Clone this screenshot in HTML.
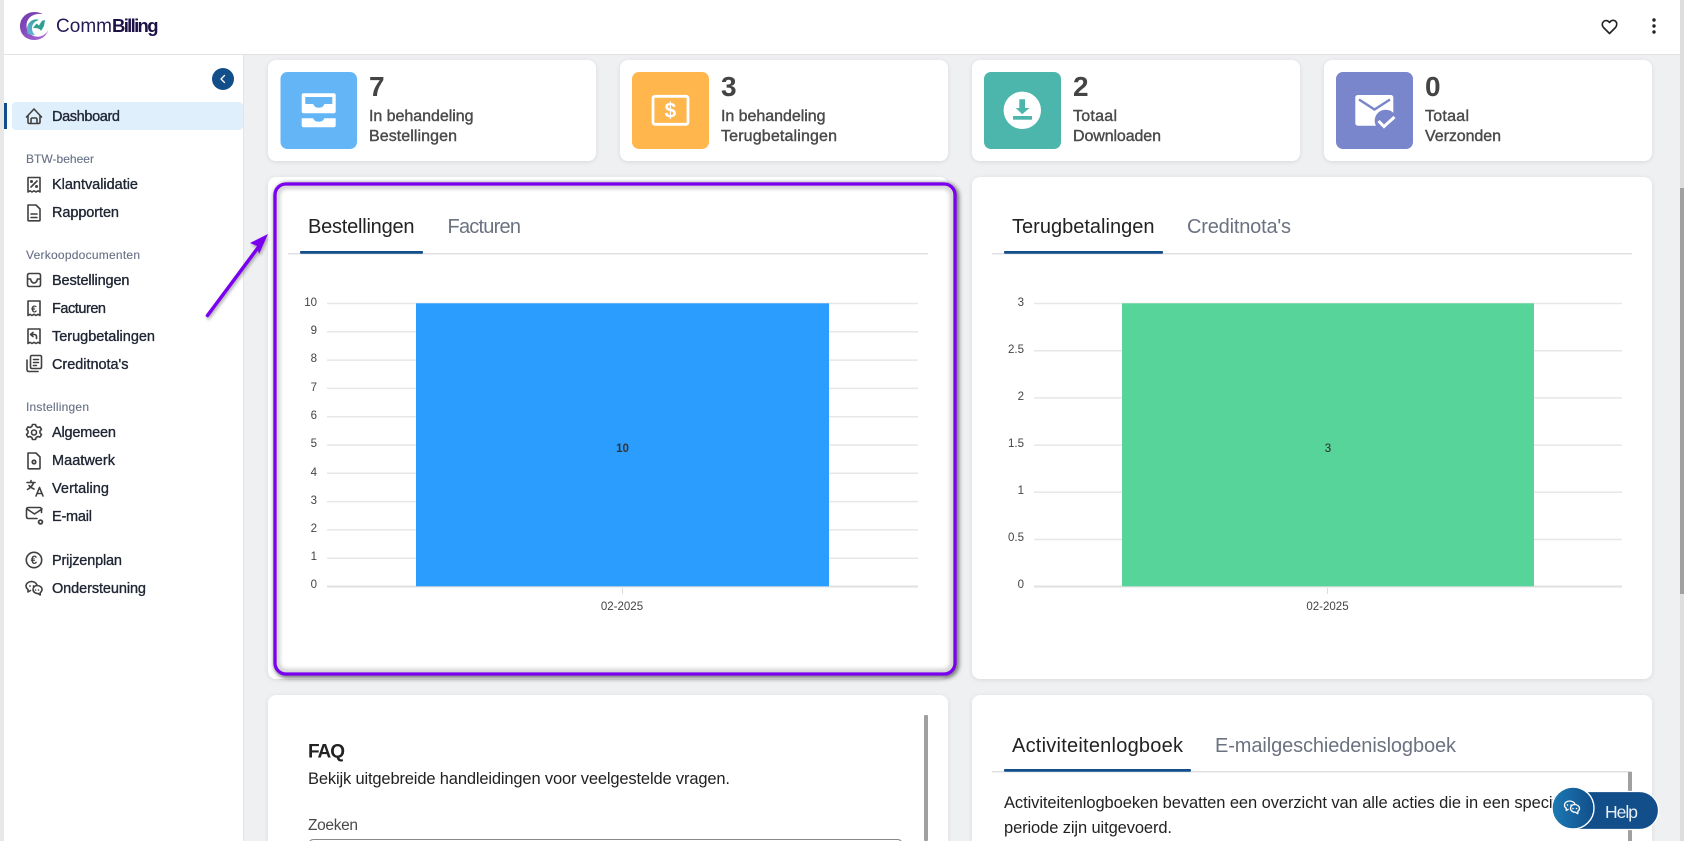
<!DOCTYPE html>
<html lang="nl"><head><meta charset="utf-8"><title>CommBilling</title>
<style>
html,body{margin:0;padding:0;width:1684px;height:841px;overflow:hidden;background:#eff0f2}
svg{display:block;font-family:"Liberation Sans",Arial,sans-serif}
.n text{font-size:14.5px;fill:#1f2533;stroke:#1f2533;stroke-width:.35}
.s text{font-size:12px;fill:#667085;stroke:#667085;stroke-width:.12}
.ic{fill:none;stroke:#404040;stroke-width:1.6;stroke-linecap:round;stroke-linejoin:round}
.ict{font-size:10.5px;font-weight:bold;fill:#404040;text-anchor:middle}
.num{font-size:28px;font-weight:bold;fill:#444}
.lbl{font-size:16px;fill:#4a4a4a;stroke:#4a4a4a;stroke-width:.4}
.tab{font-size:20px;fill:#222}
.tabi{font-size:20px;fill:#6b7280}
.y{font-size:11.5px;fill:#444;text-anchor:end}
.g{stroke:#e7e7e7;stroke-width:1.5}
.t{font-size:16.5px;fill:#222}
</style></head><body>
<svg width="1684" height="841" viewBox="0 0 1684 841" xmlns="http://www.w3.org/2000/svg">
<defs>
<filter id="sh" x="-5%" y="-5%" width="110%" height="115%"><feDropShadow dx="0" dy="1" stdDeviation="2" flood-color="#000" flood-opacity=".1"/></filter>
<filter id="bl" x="-5%" y="-5%" width="110%" height="110%"><feGaussianBlur stdDeviation="2.500"/></filter>
<filter id="ab" x="-30%" y="-30%" width="160%" height="160%"><feDropShadow dx="1" dy="2" stdDeviation="1.500" flood-color="#000" flood-opacity=".35"/></filter>
<linearGradient id="hg" x1="0" x2="1"><stop offset="0" stop-color="#1c7ab4"/><stop offset="1" stop-color="#114e8a"/></linearGradient>
<linearGradient id="lg" x1="0" y1="0" x2="1" y2="1"><stop offset="0" stop-color="#6a37a8"/><stop offset="1" stop-color="#b06ad8"/></linearGradient>
<linearGradient id="lt" x1="0" y1="1" x2="1" y2="0"><stop offset="0" stop-color="#6ab6e0"/><stop offset="1" stop-color="#2f9f8f"/></linearGradient>
</defs>
<rect width="1684" height="841" fill="#eff0f2"/>
<rect x="0" y="0" width="4" height="841" fill="#e8e8e8"/>
<rect x="1680" y="0" width="4" height="841" fill="#dedede"/>
<rect x="1680" y="188" width="4" height="406" fill="#a0a0a0"/>

<!-- sidebar -->
<rect x="4" y="54" width="240" height="787" fill="#fff"/>
<rect x="243" y="54" width="1" height="787" fill="#e4e4e4"/>
<rect x="12" y="102" width="231" height="28" rx="4" fill="#e0effc"/>
<rect x="4" y="103" width="3" height="26" fill="#114e8a"/>
<circle cx="223" cy="79" r="11" fill="#114e8a"/>
<path d="M224.500 75.500 221 79l3.500 3.500" fill="none" stroke="#fff" stroke-width="1.300" stroke-linecap="round" stroke-linejoin="round"/>

<g class="n">
<text x="52" y="121" textLength="68">Dashboard</text>
<text x="52" y="189" textLength="86">Klantvalidatie</text>
<text x="52" y="217" textLength="67">Rapporten</text>
<text x="52" y="285" textLength="77.500">Bestellingen</text>
<text x="52" y="313" textLength="54">Facturen</text>
<text x="52" y="341" textLength="103">Terugbetalingen</text>
<text x="52" y="369" textLength="76.500">Creditnota's</text>
<text x="52" y="437" textLength="64">Algemeen</text>
<text x="52" y="465" textLength="63">Maatwerk</text>
<text x="52" y="493" textLength="57">Vertaling</text>
<text x="52" y="521" textLength="40">E-mail</text>
<text x="52" y="565" textLength="70">Prijzenplan</text>
<text x="52" y="593" textLength="94">Ondersteuning</text>
</g>
<g class="s">
<text x="26" y="163" textLength="68">BTW-beheer</text>
<text x="26" y="259" textLength="114">Verkoopdocumenten</text>
<text x="26" y="411" textLength="63">Instellingen</text>
</g>

<g class="ic">
<path d="M26.500 117 34 109l7.500 8M28 115.500V122q0 1.500 1.500 1.500h9q1.500 0 1.500-1.500v-6.500M31 123.500v-4q0-1.500 1.500-1.500h3q1.500 0 1.500 1.500v4"/>
<path d="M28 177.500h12v14.500l-2-1.200-2 1.200-2-1.200-2 1.200-2-1.200-2 1.200zM37 181l-6 6"/><circle cx="31.500" cy="181.500" r=".7"/><circle cx="36.500" cy="186.500" r=".7"/>
<path d="M28 205h8l4 4v11q0 .8-.8.800H28.800q-.8 0-.8-.8zM31 214h6M31 217.500h6"/>
<path d="M27.500 275.500q0-2 2-2h9q2 0 2 2v9q0 2-2 2h-9q-2 0-2-2zM27.500 279h3q1 4 3.500 4t3.500-4h3"/>
<path d="M28 301h12v14.500l-2-1.200-2 1.200-2-1.200-2 1.200-2-1.200-2 1.200z"/>
<path d="M33 336.500l-2.500-2 2.500-2M30.500 334.500h3.500q2.500 0 2.500 2v2"/><path d="M28 329h12v14.500l-2-1.200-2 1.200-2-1.200-2 1.200-2-1.200-2 1.200z"/>
<path d="M30.500 357q0-1.500 1.500-1.500h8q1.500 0 1.500 1.500v10q0 1.500-1.500 1.500h-8q-1.500 0-1.500-1.500zM33.500 359.500h5M33.500 362.500h5M33.500 365.500h3M27 360v9.500q0 2 2 2h9"/>
<path d="M32.500 424.500h3l.7 2 1.800 1 2-.6 1.500 2.500-1.500 1.500v2.200l1.500 1.500-1.500 2.500-2-.6-1.800 1-.7 2h-3l-.7-2-1.800-1-2 .6-1.500-2.500 1.500-1.500v-2.200l-1.500-1.500 1.500-2.500 2 .6 1.800-1z"/><circle cx="34" cy="432.500" r="2.500"/>
<path d="M28 453h8l4 4v11q0 .8-.8.800H28.800q-.8 0-.8-.8z"/>
<path d="M27 482.500h8M31 480.500v2M33.500 482.500q-1 4-6 7M29 485.500q1.500 2 5 3.500M36 496l3.500-8.500 3.500 8.500M37 493.500h5"/>
<path d="M37 518.500h-8.500q-2 0-2-2v-7q0-2 2-2h11q2 0 2 2v3M27 509l7.500 5 7.500-5"/>
<circle cx="34" cy="560" r="7.700"/>
<path d="M31.500 581.500c-3 0-5.500 2-5.500 4.500 0 1.500.8 2.600 2 3.500v2.500l2.500-1.500"/><path d="M37 585c-1-2-3-3.500-5.500-3.500"/><path d="M37 585.500c2.800 0 5 1.700 5 4 0 1.300-.7 2.400-1.800 3.200v2.300l-2.200-1.400c-2.800 0-5-1.800-5-4.100s1.800-4 4-4z"/>
</g>
<g fill="#404040">
<circle cx="34" cy="462" r="2.600"/><circle cx="34" cy="462" r=".9" fill="#fff"/>
<circle cx="40.500" cy="522" r="2.800"/><circle cx="40.500" cy="522" r="1" fill="#fff"/>
<circle cx="30" cy="586" r=".9"/><circle cx="33.500" cy="586" r=".9"/><circle cx="35.500" cy="590" r=".8"/><circle cx="38.500" cy="590" r=".8"/>
</g>
<text class="ict" x="34" y="312.500">€</text>
<text class="ict" x="34" y="564" style="font-size:11.500px">€</text>

<!-- header -->
<rect x="0" y="0" width="1680" height="54" fill="#fff"/>
<rect x="0" y="0" width="4" height="54" fill="#e8e8e8"/>
<rect x="4" y="54" width="1676" height="1" fill="#e3e3e3"/>
<!-- logo -->
<path d="M34.500 12c-8.500 0-14.500 6.500-14.500 14.300 0 8 6.200 13.700 14 13.700 7 0 12-3.500 14.500-10-3 5-8 7.500-13 6.500-5-1-9-5-9-11 0-6 4-10.500 11-11.500 2-.3 4-.2 5.500.3-2.500-1.500-5-2.300-8.500-2.300z" fill="url(#lg)"/>
<path d="M28 34c-2-5-1-10 3-13 3-2 6-2 8-1-4 1-7 4-7 8 0 3 1 5 3 7-3 0-5-.5-7-1z" fill="url(#lt)"/>
<path d="M33 28l3.500-4.500 2.500 2 4-6.500-1 1.800 3-.8-1 6-3 5c-1-2.500-3.500-3-8-3z" fill="#2f9f8f"/>
<text x="56" y="32" font-size="19" fill="#241a55" textLength="56">Comm</text>
<text x="112" y="32" font-size="18.500" font-weight="bold" fill="#1d1248" textLength="46.500">Billing</text>
<path d="M1609.500 33.500 1603.500 27.500c-4-4.500 2.500-10 6-5 3.500-5 10-.5 6 5z" fill="none" stroke="#222" stroke-width="1.600" stroke-linejoin="round"/>
<circle cx="1654" cy="20" r="1.700" fill="#222"/><circle cx="1654" cy="26" r="1.700" fill="#222"/><circle cx="1654" cy="32" r="1.700" fill="#222"/>

<!-- stat cards -->
<g fill="#fff" filter="url(#sh)">
<rect x="268" y="60" width="328" height="101" rx="8"/>
<rect x="620" y="60" width="328" height="101" rx="8"/>
<rect x="972" y="60" width="328" height="101" rx="8"/>
<rect x="1324" y="60" width="328" height="101" rx="8"/>
</g>
<rect x="280.500" y="72" width="76.500" height="77" rx="7" fill="#64b5f6"/>
<rect x="632" y="72" width="77" height="77" rx="7" fill="#ffb74d"/>
<rect x="984" y="72" width="77" height="77" rx="7" fill="#4db6ac"/>
<rect x="1336" y="72" width="77" height="77" rx="7" fill="#7986cb"/>
<!-- inbox icon -->
<path d="M301.700 95.300q0-2 2-2h30q2 0 2 2v16q0 2-2 2h-30q-2 0-2-2z" fill="#fff"/>
<path d="M305.300 97h27v7h-8q-1 3.800-5.500 3.800t-5.500-3.800h-8z" fill="#64b5f6"/>
<path d="M301.700 118.300h11.500q1 3.500 5.500 3.500t5.500-3.500h11.500v7q0 2-2 2h-30q-2 0-2-2z" fill="#fff"/>
<!-- dollar -->
<rect x="653" y="96.300" width="35" height="28" rx="2" fill="none" stroke="#fff" stroke-width="2.800"/>
<text x="670.300" y="117.500" font-size="21" font-weight="bold" fill="#fff" text-anchor="middle">$</text>
<!-- download -->
<circle cx="1022.300" cy="110.300" r="18.700" fill="#fff"/>
<path d="M1019.300 99.300h5.700v8.700h4.500l-7.300 6.200-6.500-6.200h3.600z" fill="#4db6ac"/>
<rect x="1013" y="116" width="19" height="3.700" fill="#4db6ac"/>
<!-- mail check -->
<rect x="1355.300" y="95" width="38" height="30.700" rx="2.500" fill="#fff"/>
<path d="M1359 99.500l15.500 10 15.500-10" fill="none" stroke="#7986cb" stroke-width="2.500"/>
<circle cx="1385.700" cy="120.700" r="11" fill="#7986cb"/>
<path d="M1378.500 121l5.500 5.500 10.500-9.500" fill="none" stroke="#fff" stroke-width="3"/>

<text class="num" x="369" y="96">7</text>
<text class="num" x="721" y="96">3</text>
<text class="num" x="1073" y="96">2</text>
<text class="num" x="1425" y="96">0</text>
<text class="lbl" x="369" y="121" textLength="104.500">In behandeling</text>
<text class="lbl" x="369" y="141" textLength="88">Bestellingen</text>
<text class="lbl" x="721" y="121" textLength="104.500">In behandeling</text>
<text class="lbl" x="721" y="141" textLength="116">Terugbetalingen</text>
<text class="lbl" x="1073" y="121" textLength="44">Totaal</text>
<text class="lbl" x="1073" y="141" textLength="88">Downloaden</text>
<text class="lbl" x="1425" y="121" textLength="44">Totaal</text>
<text class="lbl" x="1425" y="141" textLength="76">Verzonden</text>

<!-- chart cards -->
<g fill="#fff" filter="url(#sh)">
<rect x="268" y="177" width="680" height="502" rx="8"/>
<rect x="972" y="177" width="680" height="502" rx="8"/>
<rect x="268" y="695" width="680" height="160" rx="8"/>
<rect x="972" y="695" width="680" height="160" rx="8"/>
</g>

<!-- highlight box -->
<rect x="276.500" y="185.500" width="680" height="490" rx="11" fill="none" stroke="#333" stroke-width="4" filter="url(#bl)" opacity=".85"/>
<rect x="275" y="184" width="680" height="490" rx="11" fill="#fff"/>
<rect x="277.500" y="186.500" width="675" height="485" rx="9" fill="none" stroke="#444" stroke-width="2.500" filter="url(#bl)" opacity=".5"/>

<!-- left chart -->
<text class="tab" x="308" y="233" textLength="106.500">Bestellingen</text>
<text class="tabi" x="447.500" y="233" textLength="73.500">Facturen</text>
<rect x="288" y="253" width="640" height="1.500" fill="#e0e0e0"/>
<rect x="300" y="251" width="123" height="2.800" rx="1" fill="#114e8a"/>
<g class="g">
<path d="M327 303.500H918M327 331.800H918M327 360.100H918M327 388.400H918M327 416.700H918M327 445H918M327 473.300H918M327 501.600H918M327 529.900H918M327 558.200H918"/>
</g>
<rect x="327" y="585.500" width="591" height="2" fill="#e0e0e0"/>
<rect x="622" y="588" width="1" height="6" fill="#ddd"/>
<rect x="416" y="303.300" width="413" height="283" fill="#2a9dff"/>
<g class="y">
<text x="317" y="306">10</text><text x="317" y="334">9</text><text x="317" y="362">8</text><text x="317" y="391">7</text><text x="317" y="419">6</text><text x="317" y="447">5</text><text x="317" y="476">4</text><text x="317" y="504">3</text><text x="317" y="532">2</text><text x="317" y="560">1</text><text x="317" y="588">0</text>
</g>
<text x="622.500" y="452" font-size="11.500" font-weight="bold" fill="#333" text-anchor="middle">10</text>
<text x="622" y="610" font-size="11.500" fill="#444" text-anchor="middle">02-2025</text>
<rect x="275" y="184" width="680" height="490" rx="11" fill="none" stroke="#7a00f0" stroke-width="3.300"/>

<!-- right chart -->
<text class="tab" x="1012" y="233" textLength="142.500">Terugbetalingen</text>
<text class="tabi" x="1187" y="233" textLength="104">Creditnota's</text>
<rect x="992" y="253" width="640" height="1.500" fill="#e0e0e0"/>
<rect x="1004" y="251" width="159" height="2.800" rx="1" fill="#114e8a"/>
<g class="g"><path d="M1034 303.500H1622M1034 350.700H1622M1034 397.900H1622M1034 445.100H1622M1034 492.300H1622M1034 539.500H1622"/></g>
<rect x="1034" y="585.500" width="588" height="2" fill="#e0e0e0"/>
<rect x="1327" y="588" width="1" height="6" fill="#ddd"/>
<rect x="1122" y="303.300" width="412" height="283" fill="#57d49a"/>
<g class="y">
<text x="1024" y="306">3</text><text x="1024" y="353">2.5</text><text x="1024" y="400">2</text><text x="1024" y="447">1.5</text><text x="1024" y="494">1</text><text x="1024" y="541">0.5</text><text x="1024" y="588">0</text>
</g>
<text x="1328" y="452" font-size="11.500" fill="#333" stroke="#333" stroke-width=".1" text-anchor="middle">3</text>
<text x="1327.500" y="610" font-size="11.500" fill="#444" text-anchor="middle">02-2025</text>

<!-- FAQ -->
<rect x="924" y="715" width="4" height="126" rx="1" fill="#a0a0a0"/>
<text x="308" y="757.500" font-size="19" font-weight="bold" fill="#222" textLength="37">FAQ</text>
<text class="t" x="308" y="784" textLength="422">Bekijk uitgebreide handleidingen voor veelgestelde vragen.</text>
<text x="308" y="830" font-size="15.500" fill="#4a4a4a" textLength="50">Zoeken</text>
<rect x="308.500" y="839.500" width="594" height="30" rx="5" fill="none" stroke="#888" stroke-width="1"/>

<!-- logs -->
<text class="tab" x="1012" y="752" textLength="171">Activiteitenlogboek</text>
<text class="tabi" x="1215" y="752" textLength="241">E-mailgeschiedenislogboek</text>
<rect x="992" y="771" width="640" height="1.500" fill="#e0e0e0"/>
<rect x="1004" y="769" width="187" height="2.800" rx="1" fill="#114e8a"/>
<rect x="1628" y="772" width="4" height="69" fill="#a0a0a0"/>
<text class="t" x="1004" y="808" textLength="583">Activiteitenlogboeken bevatten een overzicht van alle acties die in een specifieke</text>
<text class="t" x="1004" y="833" textLength="168">periode zijn uitgevoerd.</text>

<!-- help -->
<rect x="1553" y="791.500" width="105.500" height="38" rx="19" fill="#114e8a" stroke="#fff" stroke-width="1.200"/>
<circle cx="1573" cy="808" r="21" fill="url(#hg)" stroke="#fff" stroke-width="1.400"/>
<g fill="none" stroke="#fff" stroke-width="1.300" stroke-linejoin="round">
<path d="M1569.500 801c-3 0-5 2-5 4.200 0 1.300.7 2.400 1.800 3.100v2.200l2.300-1.400"/><path d="M1575 804c-1-1.800-3-3-5.500-3"/>
<path d="M1574.500 804.500c2.800 0 5 1.700 5 3.900 0 1.200-.7 2.300-1.700 3v2.300l-2.300-1.400c-2.700 0-5-1.700-5-3.900s1.800-3.900 4-3.900z"/>
</g>
<g fill="#fff"><circle cx="1567.500" cy="805" r=".8"/><circle cx="1571" cy="805" r=".8"/><circle cx="1573" cy="808.500" r=".8"/><circle cx="1576.500" cy="808.500" r=".8"/></g>
<text x="1605" y="818" font-size="17.500" fill="#e8eef5" textLength="33">Help</text>

<!-- arrow -->
<g filter="url(#ab)">
<path d="M207.500 315.500 260 245" stroke="#7a00f0" stroke-width="3.500" stroke-linecap="round" fill="none"/>
<path d="M268 234 250 243 257 246 259 254z" fill="#7a00f0"/>
</g>
</svg>
</body></html>
